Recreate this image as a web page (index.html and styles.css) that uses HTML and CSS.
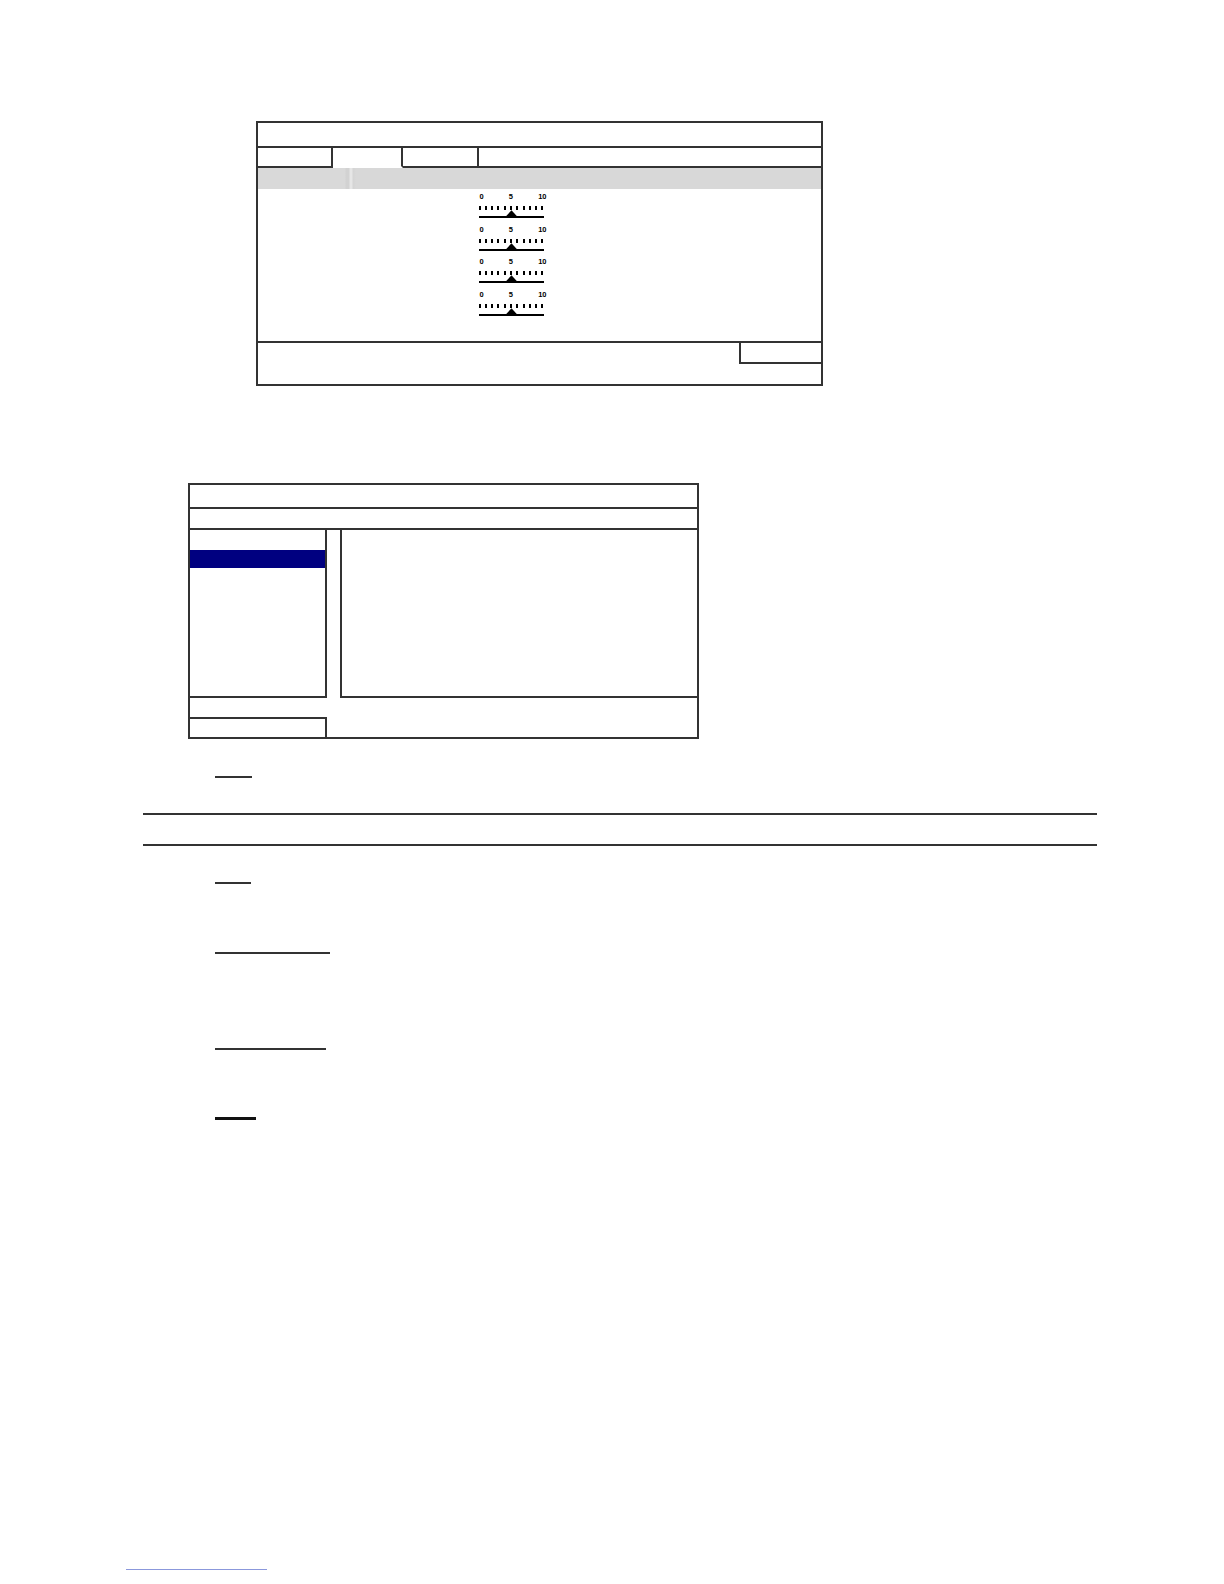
FILE: index.html
```html
<!DOCTYPE html>
<html>
<head>
<meta charset="utf-8">
<title>Manual page</title>
<link rel="stylesheet" href="styles.css">
</head>
<body>
<div class="page">
  <div class="dlg1">
    <div class="dlg1-title"></div>
    <div class="dlg1-tabs">
      <div class="tab tab-a"></div>
      <div class="tab tab-b active"></div>
      <div class="tab tab-c"></div>
      <div class="tab tab-rest"></div>
    </div>
    <div class="dlg1-bar"></div>
    <div class="dlg1-body">
      <div class="sliders">
        <div class="scale">
          <div class="scale-nums"><span>0</span><span>5</span><span>10</span></div>
          <svg class="scale-svg" width="67" height="16" viewBox="0 0 67 16">
            <g fill="#000" shape-rendering="crispEdges">
              <rect x="1" y="3" width="2" height="4"/><rect x="7" y="3" width="2" height="4"/><rect x="13" y="3" width="2" height="4"/><rect x="19" y="3" width="2" height="4"/><rect x="26" y="3" width="2" height="4"/><rect x="32" y="3" width="2" height="4"/><rect x="38" y="3" width="2" height="4"/><rect x="45" y="3" width="2" height="4"/><rect x="51" y="3" width="2" height="4"/><rect x="57" y="3" width="2" height="4"/><rect x="63" y="3" width="2" height="4"/>
              <rect x="1" y="13" width="65" height="2"/>
            </g>
            <polygon points="27.8,13.5 39.2,13.5 33.5,7.3" fill="#000"/>
          </svg>
        </div>
        <div class="scale">
          <div class="scale-nums"><span>0</span><span>5</span><span>10</span></div>
          <svg class="scale-svg" width="67" height="16" viewBox="0 0 67 16">
            <g fill="#000" shape-rendering="crispEdges">
              <rect x="1" y="3" width="2" height="4"/><rect x="7" y="3" width="2" height="4"/><rect x="13" y="3" width="2" height="4"/><rect x="19" y="3" width="2" height="4"/><rect x="26" y="3" width="2" height="4"/><rect x="32" y="3" width="2" height="4"/><rect x="38" y="3" width="2" height="4"/><rect x="45" y="3" width="2" height="4"/><rect x="51" y="3" width="2" height="4"/><rect x="57" y="3" width="2" height="4"/><rect x="63" y="3" width="2" height="4"/>
              <rect x="1" y="13" width="65" height="2"/>
            </g>
            <polygon points="27.8,13.5 39.2,13.5 33.5,7.3" fill="#000"/>
          </svg>
        </div>
        <div class="scale">
          <div class="scale-nums"><span>0</span><span>5</span><span>10</span></div>
          <svg class="scale-svg" width="67" height="16" viewBox="0 0 67 16">
            <g fill="#000" shape-rendering="crispEdges">
              <rect x="1" y="3" width="2" height="4"/><rect x="7" y="3" width="2" height="4"/><rect x="13" y="3" width="2" height="4"/><rect x="19" y="3" width="2" height="4"/><rect x="26" y="3" width="2" height="4"/><rect x="32" y="3" width="2" height="4"/><rect x="38" y="3" width="2" height="4"/><rect x="45" y="3" width="2" height="4"/><rect x="51" y="3" width="2" height="4"/><rect x="57" y="3" width="2" height="4"/><rect x="63" y="3" width="2" height="4"/>
              <rect x="1" y="13" width="65" height="2"/>
            </g>
            <polygon points="27.8,13.5 39.2,13.5 33.5,7.3" fill="#000"/>
          </svg>
        </div>
        <div class="scale">
          <div class="scale-nums"><span>0</span><span>5</span><span>10</span></div>
          <svg class="scale-svg" width="67" height="16" viewBox="0 0 67 16">
            <g fill="#000" shape-rendering="crispEdges">
              <rect x="1" y="3" width="2" height="4"/><rect x="7" y="3" width="2" height="4"/><rect x="13" y="3" width="2" height="4"/><rect x="19" y="3" width="2" height="4"/><rect x="26" y="3" width="2" height="4"/><rect x="32" y="3" width="2" height="4"/><rect x="38" y="3" width="2" height="4"/><rect x="45" y="3" width="2" height="4"/><rect x="51" y="3" width="2" height="4"/><rect x="57" y="3" width="2" height="4"/><rect x="63" y="3" width="2" height="4"/>
              <rect x="1" y="13" width="65" height="2"/>
            </g>
            <polygon points="27.8,13.5 39.2,13.5 33.5,7.3" fill="#000"/>
          </svg>
        </div>
      </div>
    </div>
    <div class="dlg1-foot"><div class="dlg1-btn"></div></div>
  </div>

  <div class="dlg2">
    <div class="dlg2-title"></div>
    <div class="dlg2-row"></div>
    <div class="dlg2-mid">
      <div class="dlg2-list">
        <div class="dlg2-sel"></div>
      </div>
      <div class="dlg2-pane"></div>
    </div>
    <div class="dlg2-row2"></div>
    <div class="dlg2-foot"><div class="dlg2-btn"></div></div>
  </div>

  <div class="uline u-note"></div>
  <div class="rule rule-a"></div>
  <div class="rule rule-b"></div>
  <div class="uline u-3"></div>
  <div class="uline u-4"></div>
  <div class="uline u-5"></div>
  <div class="uline u-6"></div>
  <div class="link-line"></div>
</div>
</body>
</html>
```

FILE: styles.css
```css
* { box-sizing: border-box; }
html, body { margin: 0; padding: 0; background: #fff; }
body { font-family: "Liberation Sans", Arial, sans-serif; }
.page { width: 1224px; height: 1584px; overflow: hidden; padding-top: 121px; --ln: #333; }

/* Dialog 1 */
.dlg1 { margin-left: 256px; width: 567px; border: 2px solid var(--ln); }
.dlg1-title { height: 25px; border-bottom: 2px solid var(--ln); }
.dlg1-tabs { display: flex; height: 20px; }
.tab { border-bottom: 2px solid var(--ln); }
.tab-a { width: 75px; border-right: 2px solid var(--ln); }
.tab-b { width: 70px; border-right: 2px solid var(--ln); }
.tab-c { width: 76px; border-right: 2px solid var(--ln); }
.tab-rest { flex: 1; }
.tab.active { border-bottom-color: #fff; }
.dlg1-bar {
  height: 21px;
  background: linear-gradient(to right, #d9d9d9 0, #d9d9d9 87px, #d2d2d2 88px, #d2d2d2 91px, #e6e6e6 92px, #e6e6e6 94px, #d4d4d4 95px, #d8d8d8 98px, #d8d8d8 100%);
}
.dlg1-body { height: 152px; padding-top: 2px; }
.sliders { margin-left: 220px; width: 70px; }
.scale { height: 32.5px; }
.scale-nums {
  display: flex; justify-content: space-between;
  width: 68.5px; padding-left: 1.5px;
  height: 12px; line-height: 12px;
  font-size: 7.5px; font-weight: bold; color: #000;
}
.scale-svg { display: block; }
.dlg1-foot { height: 43px; border-top: 2px solid var(--ln); display: flex; justify-content: flex-end; }
.dlg1-btn { width: 82px; height: 21px; border-left: 2px solid var(--ln); border-bottom: 2px solid var(--ln); }

/* Dialog 2 */
.dlg2 { margin-top: 97px; margin-left: 188px; width: 511px; border: 2px solid var(--ln); }
.dlg2-title { height: 24px; border-bottom: 2px solid var(--ln); }
.dlg2-row { height: 21px; border-bottom: 2px solid var(--ln); }
.dlg2-mid { display: flex; height: 168px; }
.dlg2-list { width: 137px; border-right: 2px solid var(--ln); border-bottom: 2px solid var(--ln); padding-top: 20px; }
.dlg2-sel { height: 18px; background: #000080; }
.dlg2-pane { flex: 1; margin-left: 13px; border-left: 2px solid var(--ln); border-bottom: 2px solid var(--ln); }
.dlg2-row2 { height: 19px; }
.dlg2-foot { height: 20px; }
.dlg2-btn { width: 137px; height: 20px; border-top: 2px solid var(--ln); border-right: 2px solid var(--ln); }

/* Document lines */
.uline { height: 0; border-top: 2px solid var(--ln); margin-left: 215px; }
.u-note { margin-top: 37px; width: 37px; }
.rule { height: 0; border-top: 2px solid var(--ln); margin-left: 143px; width: 954px; }
.rule-a { margin-top: 35px; }
.rule-b { margin-top: 29px; }
.u-3 { margin-top: 36px; width: 36px; }
.u-4 { margin-top: 68px; width: 115px; }
.u-5 { margin-top: 94px; width: 111px; }
.u-6 { margin-top: 67px; width: 41px; border-top: 3px solid #111; }
.link-line { margin-top: 449px; margin-left: 126px; width: 141px; height: 0; border-top: 1px solid #8b98dc; }
```
